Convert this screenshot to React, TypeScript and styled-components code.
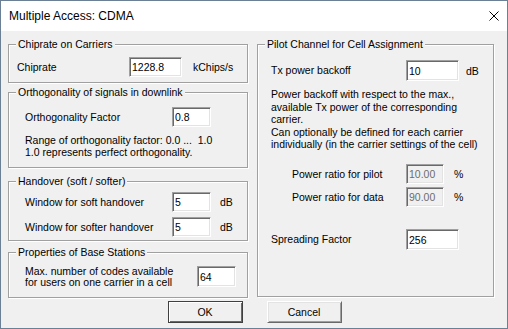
import styled, { createGlobalStyle } from "styled-components";

const GlobalStyle = createGlobalStyle`
  html, body {
    margin: 0;
    padding: 0;
    background: #f0f0f0;
  }
  * {
    box-sizing: border-box;
  }
`;

const App: React.FC = () => {
  return (
    <>
      <GlobalStyle />
      <Window>
        <TitleBar>
          <Title>Multiple Access: CDMA</Title>
          <CloseIcon width="10" height="10" viewBox="0 0 10 10">
            <path d="M0.5 0.5 L9.5 9.5 M9.5 0.5 L0.5 9.5" stroke="#000" strokeWidth="1" />
          </CloseIcon>
        </TitleBar>

        <Body>
          <Column>
            <Group $h={39}>
              <Caption>Chiprate on Carriers</Caption>
              <Row $mt={6} $pl={8}>
                <Label $w={112}>Chiprate</Label>
                <Field $w={53} defaultValue="1228.8" />
                <Unit $ml={11}>kChips/s</Unit>
              </Row>
            </Group>

            <Group $h={76} $mt={9}>
              <Caption>Orthogonality of signals in downlink</Caption>
              <Row $mt={8} $pl={16}>
                <Label $w={147}>Orthogonality Factor</Label>
                <Field $w={39} defaultValue="0.8" />
              </Row>
              <Note $mt={8} $pl={16} $lh={11.5}>
                Range of orthogonality factor: 0.0 ...&nbsp;&nbsp;1.0
                <br />
                1.0 represents perfect orthogonality.
              </Note>
            </Group>

            <Group $h={60} $mt={13}>
              <Caption>Handover (soft / softer)</Caption>
              <Row $mt={4} $pl={16}>
                <Label $w={147}>Window for soft handover</Label>
                <Field $w={39} defaultValue="5" />
                <Unit $ml={9}>dB</Unit>
              </Row>
              <Row $mt={5} $pl={16}>
                <Label $w={147}>Window for softer handover</Label>
                <Field $w={39} defaultValue="5" />
                <Unit $ml={9}>dB</Unit>
              </Row>
            </Group>

            <Group $h={46} $mt={11}>
              <Caption>Properties of Base Stations</Caption>
              <Row $mt={7} $pl={16} $h={21}>
                <Label $w={172} $lh={11}>
                  Max. number of codes available
                  <br />
                  for users on one carrier in a cell
                </Label>
                <Field $w={39} $h={21} defaultValue="64" />
              </Row>
            </Group>
          </Column>

          <Group $h={253}>
            <Caption>Pilot Channel for Cell Assignment</Caption>
            <Row $mt={9} $pl={13} $h={21}>
              <Label $w={135}>Tx power backoff</Label>
              <Field $w={53} $h={21} defaultValue="10" />
              <Unit $ml={7}>dB</Unit>
            </Row>
            <Note $mt={7} $pl={13} $lh={12.5}>
              Power backoff with respect to the max.,
              <br />
              available Tx power of the corresponding
              <br />
              carrier.
              <br />
              Can optionally be defined for each carrier
              <br />
              individually (in the carrier settings of the cell)
            </Note>
            <Row $mt={13.5} $pl={34}>
              <Label $w={114}>Power ratio for pilot</Label>
              <Field $w={38} defaultValue="10.00" disabled />
              <Unit $ml={10}>%</Unit>
            </Row>
            <Row $mt={3} $pl={34}>
              <Label $w={114}>Power ratio for data</Label>
              <Field $w={38} defaultValue="90.00" disabled />
              <Unit $ml={10}>%</Unit>
            </Row>
            <Row $mt={22} $pl={13} $h={21}>
              <Label $w={135}>Spreading Factor</Label>
              <Field $w={53} $h={21} defaultValue="256" />
            </Row>
          </Group>
        </Body>

        <ButtonRow>
          <Button $default>OK</Button>
          <Button>Cancel</Button>
        </ButtonRow>
      </Window>
    </>
  );
};

export default App;

const Window = styled.div`
  width: 508px;
  height: 329px;
  display: flex;
  flex-direction: column;
  border: 1px solid #6b7f95;
  background: #f0f0f0;
  font-family: "Liberation Sans", Arial, sans-serif;
  font-size: 10.5px;
  color: #000;
  overflow: hidden;
`;

const TitleBar = styled.div`
  height: 30px;
  flex: none;
  display: flex;
  align-items: center;
  justify-content: space-between;
  padding: 0 8px 0 8px;
  background: #fff;
`;

const Title = styled.span`
  font-size: 12px;
  color: #000;
`;

const CloseIcon = styled.svg`
  display: block;
  margin-right: 0;
`;

const Body = styled.div`
  display: grid;
  grid-template-columns: 240px 237px;
  column-gap: 9px;
  align-items: start;
  padding: 13px 13px 0 7px;
`;

const Column = styled.div`
  display: flex;
  flex-direction: column;
`;

const Group = styled.div<{ $h: number; $mt?: number }>`
  height: ${(p) => p.$h}px;
  margin-top: ${(p) => p.$mt ?? 0}px;
  border: 1px solid #a0a0a0;
  box-shadow: 1px 1px 0 #fff, inset 1px 1px 0 #fff;
  display: flex;
  flex-direction: column;
`;

const Caption = styled.div`
  width: fit-content;
  margin: -7px 0 0 7px;
  padding: 0 2px;
  height: 13px;
  line-height: 13px;
  background: #f0f0f0;
  white-space: nowrap;
`;

const Row = styled.div<{ $mt: number; $pl: number; $h?: number }>`
  display: flex;
  align-items: center;
  height: ${(p) => p.$h ?? 20}px;
  margin-top: ${(p) => p.$mt}px;
  padding-left: ${(p) => p.$pl}px;
  white-space: nowrap;
`;

const Label = styled.div<{ $w: number; $lh?: number }>`
  width: ${(p) => p.$w}px;
  flex: none;
  line-height: ${(p) => (p.$lh ? `${p.$lh}px` : "13px")};
`;

const Field = styled.input<{ $w: number; $h?: number }>`
  width: ${(p) => p.$w}px;
  height: ${(p) => p.$h ?? 20}px;
  flex: none;
  margin: 0;
  padding: 0 2px;
  font: inherit;
  color: #000;
  background: #fff;
  border: 1px solid;
  border-color: #a0a0a0 #fff #fff #a0a0a0;
  box-shadow: inset 1px 1px 0 #696969, inset -1px -1px 0 #e3e3e3;
  outline: none;

  &:disabled {
    background: #f0f0f0;
    color: #6d6d6d;
  }
`;

const Unit = styled.span<{ $ml: number }>`
  margin-left: ${(p) => p.$ml}px;
`;

const Note = styled.div<{ $mt: number; $pl: number; $lh: number }>`
  margin-top: ${(p) => p.$mt}px;
  padding-left: ${(p) => p.$pl}px;
  line-height: ${(p) => p.$lh}px;
  white-space: nowrap;
`;

const ButtonRow = styled.div`
  display: flex;
  justify-content: center;
  gap: 24px;
  margin-top: 3px;
  padding-left: 1px;
`;

const Button = styled.button<{ $default?: boolean }>`
  width: 75px;
  height: 22px;
  margin: 0;
  padding: 0;
  font: inherit;
  color: #000;
  background: #f0f0f0;
  border: 1px solid;
  border-color: ${(p) => (p.$default ? "#404040" : "#fff #696969 #696969 #fff")};
  box-shadow: ${(p) =>
    p.$default
      ? "inset 1px 1px 0 #fff, inset -1px -1px 0 #696969"
      : "inset 1px 1px 0 #e3e3e3, inset -1px -1px 0 #a0a0a0"};
`;
